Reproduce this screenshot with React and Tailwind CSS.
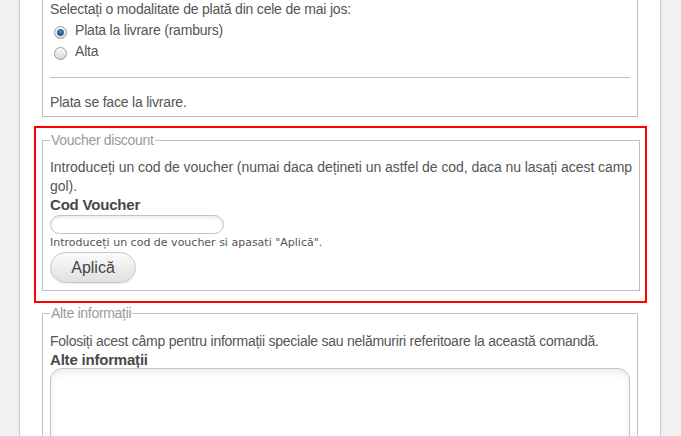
import React from "react";

function Radio({ checked }) {
  return (
    <span className="relative inline-flex h-[13px] w-[13px] shrink-0 items-center justify-center rounded-full border border-[#9a9a9a] bg-gradient-to-b from-[#fdfdfd] to-[#d6d6d6]">
      {checked && (
        <span className="h-[7px] w-[7px] rounded-full border border-[#0d3f70] bg-gradient-to-b from-[#4a9be0] to-[#0f5ca6]" />
      )}
    </span>
  );
}

export default function App() {
  return (
    <div className="h-[436px] overflow-hidden bg-[#f1f1f1] font-['Liberation_Sans',Arial,sans-serif] text-[14px] text-[#555]">
      <div className="ml-[19px] h-full w-[642px] border-x border-[#c8c8c8] bg-white px-[22px]">
        {/* payment method box (top cut off) */}
        <div className="border-x border-b border-[#c0c0c0] px-[7px] pb-[4px]">
          <p className="leading-[19px] tracking-[-0.2px]">
            Selectați o modalitate de plată din cele de mai jos:
          </p>
          <div className="mt-[1px]">
            <label className="flex h-[21px] items-center gap-[8px] pl-[4px]">
              <span className="mt-[4px] flex">
                <Radio checked />
              </span>
              <span className="tracking-[-0.2px]">Plata la livrare (ramburs)</span>
            </label>
            <label className="flex h-[21px] items-center gap-[8px] pl-[4px]">
              <span className="mt-[4px] flex">
                <Radio />
              </span>
              <span className="tracking-[-0.2px]">Alta</span>
            </label>
          </div>
          <hr className="mt-[15px] border-t border-[#bdbdbd]" />
          <p className="mt-[15px] leading-[19px] tracking-[-0.2px]">Plata se face la livrare.</p>
        </div>

        {/* highlighted voucher section */}
        <div className="mt-[9px] ml-[-8px] mr-[-9px] border-2 border-[#ff0000] pt-[4px] pb-[10px] pl-[6px] pr-[7px]">
          <fieldset className="border border-[#c0c0c0] px-[7px] pb-[7px]">
            <legend className="px-[1px] text-[14px] leading-[16px] tracking-[-0.3px] text-[#9a9a9a]">Voucher discount</legend>
            <p className="mt-[10px] whitespace-nowrap leading-[19px] tracking-[-0.05px]">
              Introduceți un cod de voucher (numai daca dețineti un astfel de cod, daca nu lasați acest camp
              <br />
              gol).
            </p>
            <div className="text-[15px] font-bold leading-[17px] tracking-[-0.2px] text-[#484848]">Cod Voucher</div>
            <input
              type="text"
              className="mt-[2px] block h-[19px] w-[174px] rounded-full border border-[#c4c4c4] bg-white shadow-[inset_0_2px_3px_rgba(0,0,0,0.08)] outline-none"
            />
            <p className="mt-[2px] font-['DejaVu_Sans',Verdana,sans-serif] text-[11px] leading-[13px] text-[#555]">
              Introduceți un cod de voucher si apasati "Aplică".
            </p>
            <button className="mt-[3px] block h-[31px] w-[86px] rounded-full border border-[#c8c8c8] bg-gradient-to-b from-[#fbfbfb] to-[#e0e0e0] text-[16px] text-[#444] shadow-[0_1px_1px_rgba(0,0,0,0.08)]">
              Aplică
            </button>
          </fieldset>
        </div>

        {/* other information */}
        <fieldset className="mt-[2px] border border-[#c0c0c0] px-[7px] pb-[7px]">
          <legend className="px-[1px] text-[14px] leading-[16px] tracking-[-0.3px] text-[#9a9a9a]">Alte informații</legend>
          <p className="mt-[11px] leading-[19px] tracking-[-0.25px]">
            Folosiți acest câmp pentru informații speciale sau nelămuriri referitoare la această comandă.
          </p>
          <div className="text-[15px] font-bold leading-[17px] tracking-[-0.2px] text-[#484848]">Alte informații</div>
          <textarea className="block h-[120px] w-full resize-none rounded-[12px] border border-[#c4c4c4] bg-white shadow-[inset_0_4px_6px_rgba(0,0,0,0.07)] outline-none" />
        </fieldset>
      </div>
    </div>
  );
}
